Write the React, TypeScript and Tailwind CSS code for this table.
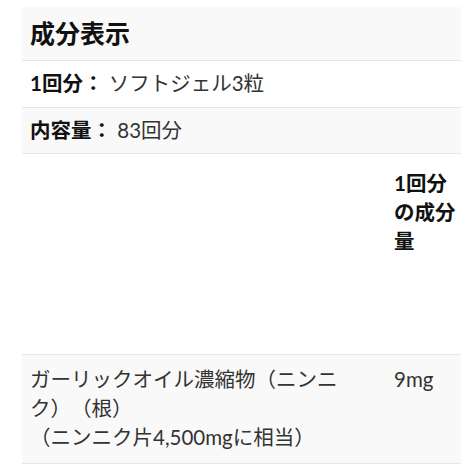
export default function App() {
  const font = { fontFamily: 'Lato, "Noto Sans CJK JP", sans-serif' };
  return (
    <div className="w-[461px] h-[471px] overflow-hidden bg-white pl-[22px] pt-[7px] [text-spacing-trim:space-all]" style={font}>
      <table className="w-[439px] border-collapse table-fixed text-[20.5px] leading-[29px] text-[#333]">
        <colgroup>
          <col className="w-[364px]" />
          <col className="w-[75px]" />
        </colgroup>
        <tbody>
          <tr className="bg-[#f9f9f9] border-b border-[#e6e6e6]">
            <td colSpan={2} className="h-[53px] px-2 py-0 align-middle">
              <span className="text-[25px] leading-[35px] font-bold text-[#111]">成分表示</span>
            </td>
          </tr>
          <tr className="bg-white border-b border-[#e6e6e6]">
            <td colSpan={2} className="h-[47px] px-2 py-0 align-middle">
              <span className="font-bold text-[#111]">1回分：</span> ソフトジェル3粒
            </td>
          </tr>
          <tr className="bg-[#f9f9f9] border-b border-[#e6e6e6]">
            <td colSpan={2} className="h-[46px] px-2 py-0 align-middle">
              <span className="font-bold text-[#111]">内容量：</span> 83回分
            </td>
          </tr>
          <tr className="bg-white border-b border-[#e6e6e6]">
            <td className="h-[201px] px-2 py-0 align-top"></td>
            <td className="h-[201px] pl-2 pr-0 pt-[15px] align-top font-bold text-[#111]">1回分の成分量</td>
          </tr>
          <tr className="bg-[#f9f9f9] border-b border-[#e6e6e6]">
            <td className="h-[109px] pl-2 pr-[30px] pt-[10px] pb-0 align-top">
              ガーリックオイル濃縮物（ニンニク）（根）
              <br />
              （ニンニク片4,500mgに相当）
            </td>
            <td className="h-[109px] pl-2 pr-0 pt-[10px] align-top">9mg</td>
          </tr>
        </tbody>
      </table>
    </div>
  );
}
